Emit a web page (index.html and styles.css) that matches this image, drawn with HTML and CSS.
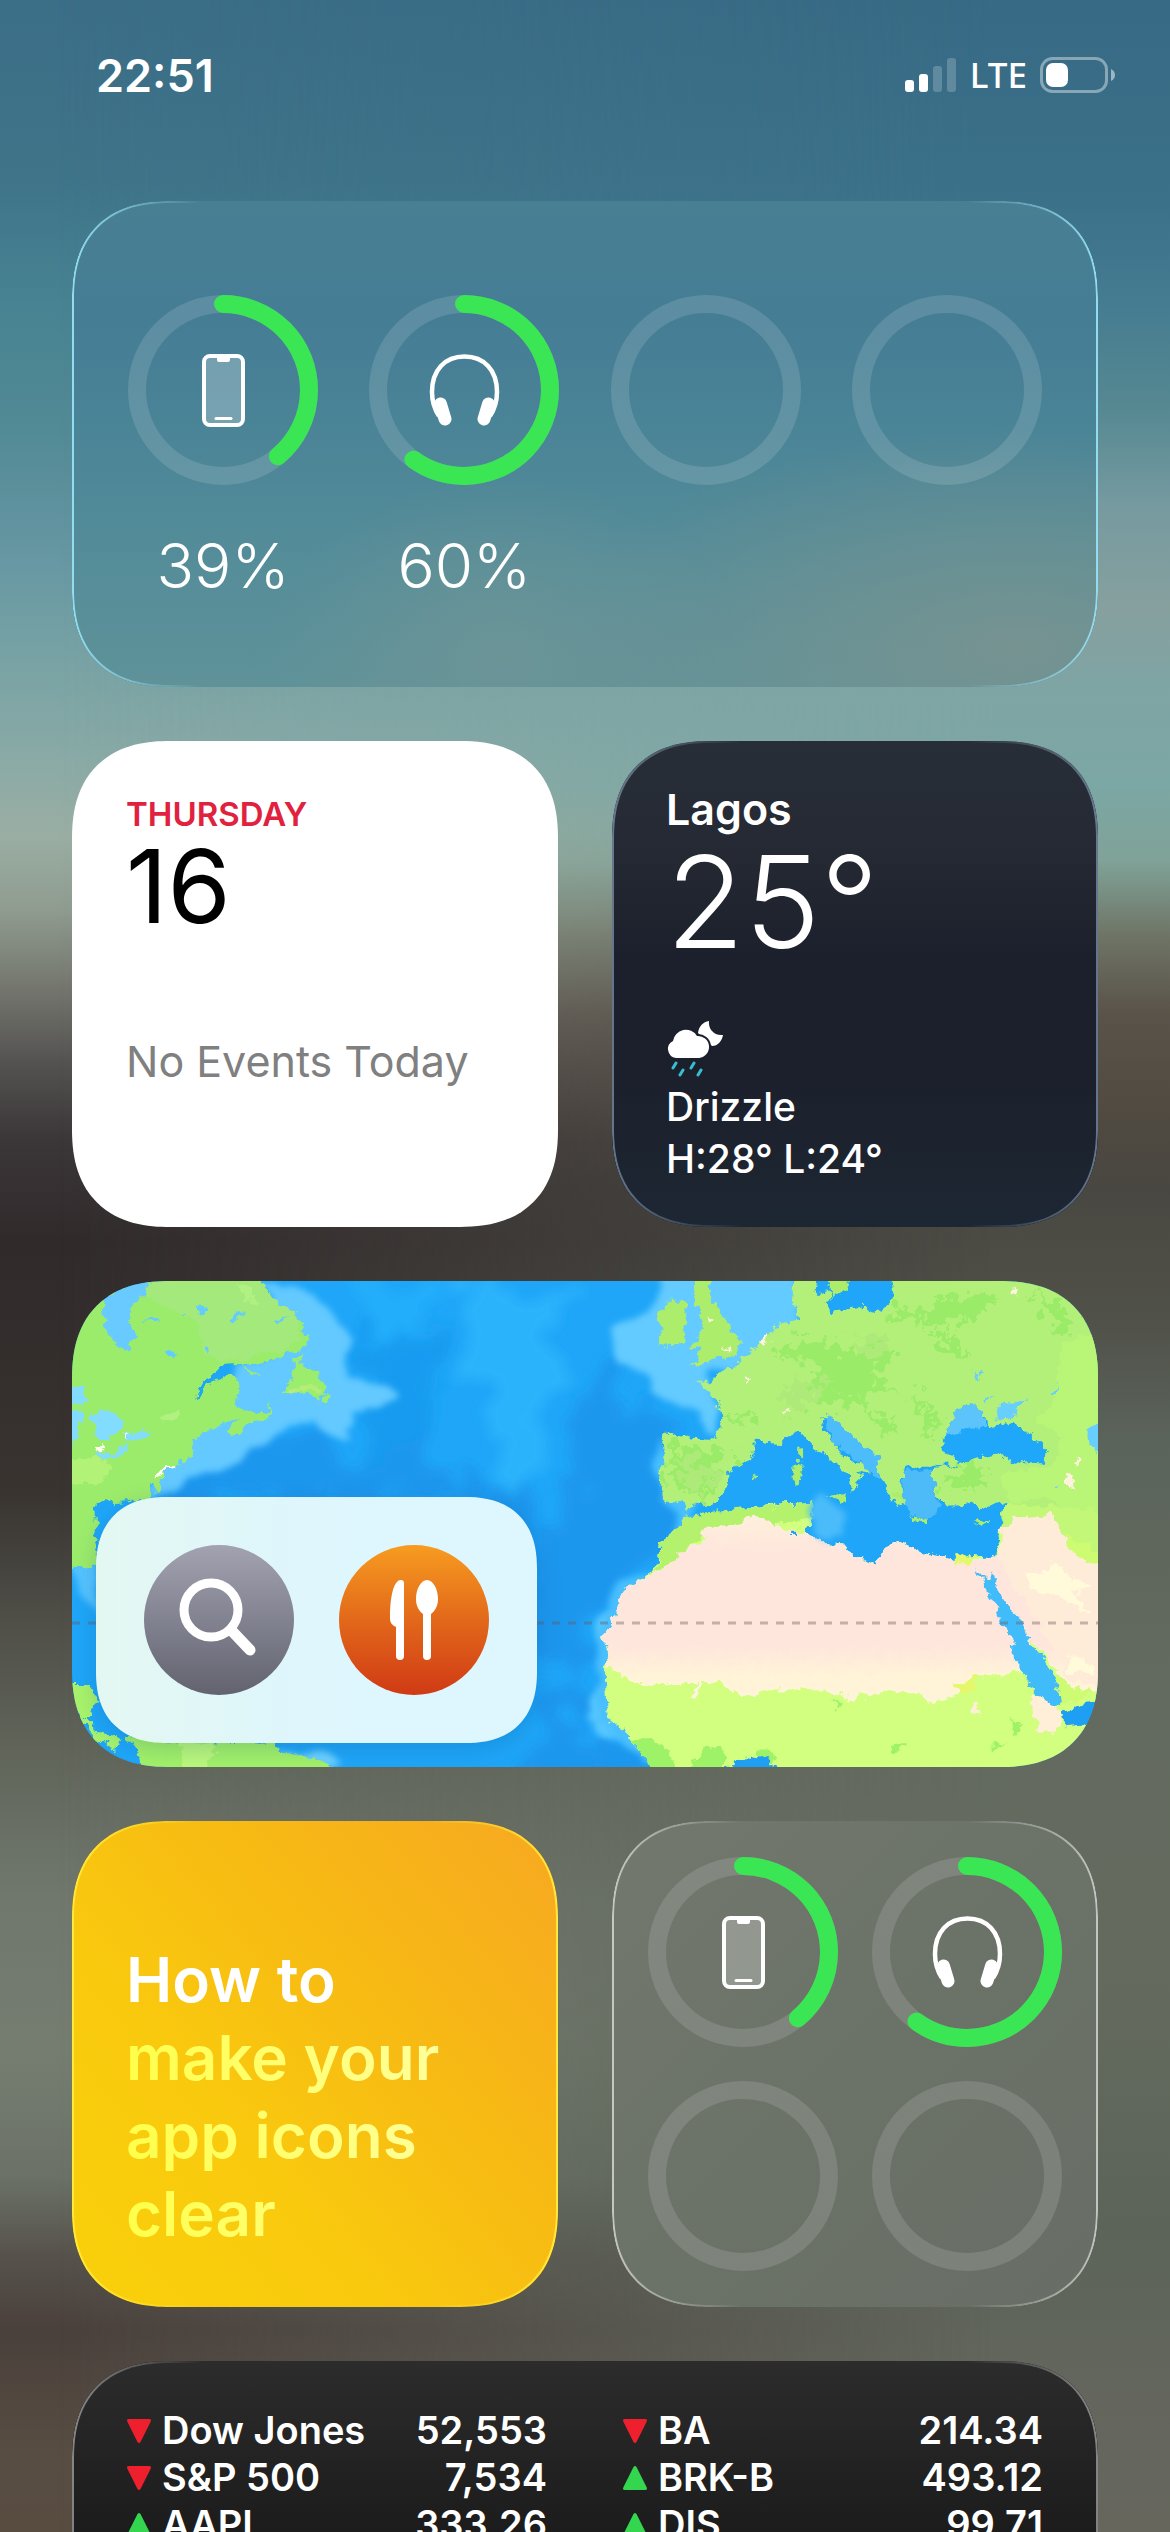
FILE: index.html
```html
<!DOCTYPE html>
<html lang="en">
<head>
    <meta charset="UTF-8">
    <meta name="viewport" content="width=device-width, initial-scale=1.0">
    <title>Today View</title>
    <link rel="stylesheet" href="styles.css">
</head>
<body>
    <!-- Shared icons -->
    <svg class="sprite" aria-hidden="true">
        <symbol id="icon-phone" viewBox="0 0 73 73">
            <rect x="17" y="2" width="39" height="69" rx="6" fill="#fff" fill-opacity=".25" stroke="#fff" stroke-width="4"/>
            <path d="M30 3h13v3q0 2-2 2h-9q-2 0-2-2z" fill="#fff"/>
            <path d="M29 64.500h15" stroke="#fff" stroke-width="3" stroke-linecap="round"/>
        </symbol>
        <symbol id="icon-headphones" viewBox="0 0 73 73">
            <path d="M11 62C5 53 4 46 4 38 4 16 17 2.500 36.500 2.500S69 16 69 38c0 8-1 15-7 24" fill="none" stroke="#fff" stroke-width="4.500"/>
            <path d="M12.500 50l4.500 15M60.500 50l-4.500 15" stroke="#fff" stroke-width="13" stroke-linecap="round"/>
        </symbol>
    </svg>

    <div class="screen">
        <header class="status-bar">
            <time class="clock">22:51</time>
            <div class="status-icons">
                <svg class="signal" viewBox="0 0 52 36" aria-label="Signal">
                    <rect x="0" y="23" width="9" height="12" rx="3" fill="#fff"/>
                    <rect x="14" y="17" width="9" height="18" rx="3" fill="#fff"/>
                    <rect x="28" y="9" width="9" height="26" rx="3" fill="#fff" fill-opacity=".2"/>
                    <rect x="42" y="1" width="9" height="34" rx="3" fill="#fff" fill-opacity=".2"/>
                </svg>
                <span class="network">LTE</span>
                <svg class="battery" viewBox="0 0 76 36" aria-label="Battery 39%">
                    <rect x="1.500" y="1.500" width="65" height="33" rx="11" fill="none" stroke="#fff" stroke-opacity=".4" stroke-width="3"/>
                    <path d="M71 12q4 2 4 6t-4 6z" fill="#fff" fill-opacity=".5"/>
                    <rect x="6" y="6" width="22" height="24" rx="7" fill="#fff"/>
                </svg>
            </div>
        </header>

        <main class="widgets">
            <section class="widget wide glass glass-blue batteries-wide">
                <div class="device">
                    <div class="ring">
                        <svg class="ring-track" viewBox="0 0 190 190">
                            <circle cx="95" cy="95" r="86"/>
                            <circle class="level" cx="95" cy="95" r="86" pathLength="100" stroke-dasharray="39 100"/>
                        </svg>
                        <svg class="device-icon"><use href="#icon-phone"/></svg>
                    </div>
                    <span class="percent">39%</span>
                </div>
                <div class="device">
                    <div class="ring">
                        <svg class="ring-track" viewBox="0 0 190 190">
                            <circle cx="95" cy="95" r="86"/>
                            <circle class="level" cx="95" cy="95" r="86" pathLength="100" stroke-dasharray="60 100"/>
                        </svg>
                        <svg class="device-icon"><use href="#icon-headphones"/></svg>
                    </div>
                    <span class="percent">60%</span>
                </div>
                <div class="device">
                    <div class="ring">
                        <svg class="ring-track" viewBox="0 0 190 190"><circle cx="95" cy="95" r="86"/></svg>
                    </div>
                </div>
                <div class="device">
                    <div class="ring">
                        <svg class="ring-track" viewBox="0 0 190 190"><circle cx="95" cy="95" r="86"/></svg>
                    </div>
                </div>
            </section>

            <section class="widget calendar">
                <h2 class="weekday">THURSDAY</h2>
                <p class="day">16</p>
                <p class="events">No Events Today</p>
            </section>

            <section class="widget glass weather">
                <h2 class="city">Lagos</h2>
                <p class="temp">25°</p>
                <svg class="weather-icon" viewBox="0 0 58 56" aria-hidden="true">
                    <path d="M43 0c-1 8 5 15 14 14-1 6-5 11-11 11L32 12C33 5 37 1 43 0z" fill="#fff"/>
                    <path d="M10 37A9 9 0 0 1 7 20 13 13 0 0 1 31 15 11 11 0 1 1 33 37z" fill="#fff" stroke="#1b202c" stroke-width="4" paint-order="stroke"/>
                    <path d="M10 42l-3 5M17 49l-3 5M28 42l-3 5M35 49l-3 5" stroke="#35bfd1" stroke-width="3" stroke-linecap="round"/>
                </svg>
                <p class="forecast">Drizzle</p>
                <p class="forecast">H:28° L:24°</p>
            </section>

            <section class="widget wide map">
                <svg class="map-canvas" viewBox="0 0 1026 486" preserveAspectRatio="xMidYMid slice" aria-hidden="true">
                    <defs>
                        <filter id="soft" x="-20%" y="-20%" width="140%" height="140%">
                            <feTurbulence type="fractalNoise" baseFrequency=".008" numOctaves="4" seed="3" result="noise"/>
                            <feDisplacementMap in="SourceGraphic" in2="noise" scale="90" xChannelSelector="R" yChannelSelector="G"/>
                            <feGaussianBlur stdDeviation="9"/>
                        </filter>
                        <filter id="softer" x="-20%" y="-20%" width="140%" height="140%">
                            <feTurbulence type="fractalNoise" baseFrequency=".008" numOctaves="4" seed="8" result="noise"/>
                            <feDisplacementMap in="SourceGraphic" in2="noise" scale="260" xChannelSelector="R" yChannelSelector="G"/>
                            <feGaussianBlur stdDeviation="16"/>
                        </filter>
                        <!-- roughens the coastlines -->
                        <filter id="coast" x="-5%" y="-5%" width="110%" height="110%" color-interpolation-filters="sRGB">
                            <feTurbulence type="fractalNoise" baseFrequency=".035" numOctaves="4" seed="5" result="noise"/>
                            <feDisplacementMap in="SourceGraphic" in2="noise" scale="38" xChannelSelector="R" yChannelSelector="G"/>
                        </filter>
                        <filter id="terrain" x="-5%" y="-5%" width="110%" height="110%" color-interpolation-filters="sRGB">
                            <feTurbulence type="fractalNoise" baseFrequency=".03" numOctaves="4" seed="11" result="noise"/>
                            <feDisplacementMap in="SourceGraphic" in2="noise" scale="130" xChannelSelector="R" yChannelSelector="G"/>
                        </filter>
                        <linearGradient id="sahara" x1="0" y1="0" x2="0" y2="1">
                            <stop offset="0" stop-color="#fff0dc"/>
                            <stop offset=".2" stop-color="#fee6dc"/>
                            <stop offset=".7" stop-color="#fee6dc"/>
                            <stop offset=".85" stop-color="#fff3d8"/>
                            <stop offset="1" stop-color="#fff4d8"/>
                        </linearGradient>
                    </defs>
                    <rect width="1026" height="486" fill="#1fa6f8"/>

                    <!-- Atlantic and the Americas -->
                    <g transform="translate(-12 -11) scale(.357 .333)">
                        <g filter="url(#softer)">
                            <path d="M240 700L480 550 700 470 840 540 900 420 1000 380 1100 600 1180 700 1250 900 1420 760 1450 560 1500 300 1700 450 1750 800 1600 950 1450 1150 1300 1500 1500 1560 1750 1560 1650 1420 1480 1420 1450 1300 1330 1200 1300 680z" fill="#1b97ee"/>
                            <path d="M860 200L1030 160 1090 330 1030 460 880 600z" fill="#199bf0"/>
                            <path d="M1130 20h330l-60 180-40 300-100 240-60-100 20-200-90-200z" fill="#2cb3fb"/>
                            <path d="M760 20h320l-20 100-180 60z" fill="#24aefb"/>
                        </g>
                        <g filter="url(#soft)">
                            <path d="M560 30L680 60 760 110 810 220 820 330 900 330 945 390 840 440 820 520 760 490 700 460 560 520 450 590 360 620 280 690 230 690 300 560 380 480 480 300 640 220z" fill="#63c9ff"/>
                            <path d="M30 880L110 880 110 1050 60 1000z" fill="#55c4ff"/>
                            <path d="M600 1420L800 1490 700 1500z" fill="#6dd2ff"/>
                            <path d="M1570 1000L1500 1080 1540 1180 1510 1300 1490 1400 1580 1400z" fill="#56c6ff"/>
                        </g>
                        <g filter="url(#coast)">
                            <path d="M0 0H555L600 90 655 125 690 190 685 230 640 245 600 275 455 285 405 330 375 390 390 380 430 335 480 315 505 325 505 350 490 375 500 410 520 425 575 430 590 395 590 420 580 445 540 455 500 490 480 505 468 480 480 460 510 440 460 455 400 490 372 510 372 555 325 580 300 600 280 635 280 665 268 672 265 640 250 640 250 690 100 700 100 895 0 885z" fill="#9cec6c"/>
                            <path d="M150 0H550L600 90 655 125 680 190 640 235 455 275 400 250 380 150 260 90z" fill="#a3e97b"/>
                            <path d="M20 560L130 570 145 600 110 640 20 645z" fill="#b2f277"/>
                            <path d="M275 440l45-10 20-15-10 35-50 5zM490 50l40-5 25 55-30-10z" fill="#b0f182"/>
                            <path d="M120 90L150 70 190 40 250 38 245 65 215 95 190 120 210 205 180 245 150 215 130 180z" fill="#68caff"/>
                            <path d="M20 345l48 15 10 40-58 5zM85 430l40-10 50 20 5 30-25 15-15 30-25 0-20-50zM180 495l75-15-5 25-65 8zM105 555l40-10 50-20-10 20-50 20-30 0zM20 430l48-5-20 60-28 60z" fill="#82dcff"/>
                            <path d="M385 110l15 0 10 15-15 15zM482 140l25-15 15 10-25 12-5 15zM597 155l40-20-30 30zM228 150l30-10 25 10-20 10zM302 255l18-15 5 10-15 15zM410 235l15 5-5 10zM335 125l12 0-5 12z" fill="#62ccff"/>
                            <path d="M680 238L660 280 640 340 615 370 650 365 690 372 720 390 725 370 740 375 748 355 735 335 735 310 705 305 690 290 672 285zM728 380l22-5-5 25-15-5zM508 290l25 10 25 15-5 5-30-15z" fill="#9ded6d"/>
                            <path d="M640 350l80 0 10 12-92 0z" fill="#b6ed7a"/>
                            <path d="M180 485l5 12 15-4-12 6-5 8zM100 540l18-12 4 10-12 12zM265 605l20-5 15-15 25 2-20 10-20 18-10 5z" fill="#fffef0"/>
                            <path d="M20 1240l58 0 22 30-5 40-20 40 45 45 55 10-15 40-50-30-32-40-58-80z" fill="#a8f36b"/>
                            <path d="M178 1395l40 15 380 10 40 30 120 35 40 50H240l-25-90z" fill="#a2f169"/>
                            <path d="M340 1415l100 10-30 90-70 5z" fill="#baf87c"/>
                        </g>
                    </g>

                    <!-- Europe, Africa and the Middle East -->
                    <g transform="translate(528 -11) scale(.333)">
                        <g filter="url(#soft)">
                            <path d="M190 0L600 0 600 160 430 290 330 310 350 400 365 500 330 500 300 440 210 380 110 310 40 250 50 170 130 140z" fill="#63cbff"/>
                            <path d="M190 500L160 580 180 700 240 730 200 850 150 920 60 960 0 1050 -10 1200 0 1350 60 1430 150 1490 220 1490 200 900 300 700z" fill="#4abfff"/>
                        </g>
                        <path d="M-20 1400l80 50 130 80H-20z" fill="#1b97ee" filter="url(#soft)"/>
                        <g filter="url(#coast)">
                            <path d="M870 0H1560V1320L1480 1290 1420 1310 1380 1315 1340 1290 1300 1240 1230 1180 1200 1060 1190 890 1180 860 1200 790 1215 700 1180 705 1140 725 1115 695 1080 710 1045 710 1015 690 1000 650 1000 590 1060 590 1120 565 1030 545 1025 520 1050 470 1080 410 1130 400 1160 470 1170 480 1230 460 1290 490 1340 540 1345 570 1310 585 1240 575 1200 555 1130 560 1060 585 960 585 915 595 905 640 910 700 895 710 870 670 835 610 830 560 780 520 735 485 700 435 665 440 670 475 730 560 800 595 810 615 775 605 780 640 755 670 755 625 690 570 640 530 605 485 575 490 545 520 465 512 460 560 385 605 385 660 350 690 290 705 265 720 245 698 190 695 180 620 195 570 185 505 200 488 250 500 350 510 370 440 350 390 320 360 290 340 350 330 355 300 400 305 430 260 510 195 520 170 600 150 595 110 580 90 585 0 650 0 640 70 690 110 690 130 800 110 840 125 880 90z" fill="#b3f07a"/>
                        </g>
                        <g filter="url(#terrain)">
                            <path d="M220 525l60 5 130 10-50 40-15 90-40 15-60-20-40-10 10-70zM530 270l50-60 90-5 60 40 90-20 70 30-60 60 80 60 50 10 50 50 10 60-30 10-40-10 40-30-40-70-80-40-60 10-10 60 60 20 30 40-40-10-50-40-30-50-40 20-80 0-20-60 30-50-50-40zM860 130l60-20 40 20 100-60 110 10-20 60-120 20-100 0zM400 430l60-10 30 30-70 20zM1290 70l90 20 50 90-40 10-60-60zM990 180l60 0 50 80-60-20zM1040 610l60-20 80 15-50 50-100 0z" fill="#9aec68"/>
                            <path d="M240 560l50-10 20 40 50 20-40 50-40 10-30-40zM580 340l80-10 60 20-60 20-80 50-40-20zM760 200l90-10 20 50-80 20z" fill="#aeea7a"/>
                        </g>
                        <g filter="url(#coast)">
                            <path d="M1400 210l130-30v560l-130 0-60-60-110 20-30-90 160-20 30-90-90-50 60-60z" fill="#b9f576"/>
                            <path d="M200 95l55 0 5 30-10 90-75 15 15-55-20-40zM270 20l60 0 0 60 30 50 25 30 5 35 35 0-5 50-30 20-60 5-60 20 40-45-30-10 0-20 20-20 10-30-20-60zM685 20h70l-10 40-50 30zM595 530l12 10 0 30-12 0zM583 575l22 5 0 50-15 10-12-20zM680 675l55-5-2 30zM880 670l30 0 5 35-20-15zM930 740l60 12-15 8-40-8zM1125 755l38-10-20 24zM453 618l18 5-12 10z" fill="#aced6c"/>
                            <path d="M635 50l35 30-35 15-20-20zM650 80l35-20 5 30-20 25z" fill="#b3f07a"/>
                            <path d="M250 742L300 750 370 745 430 715 520 705 640 700 640 740 620 790 680 820 735 825 760 860 830 885 850 850 870 815 905 820 960 850 1065 865 1180 860 1205 780 1230 710 1540 730V1530H220L150 1480 90 1400 20 1340 15 1230 25 1170 10 1100 50 1030 60 980 100 940 170 900 180 820 235 780z" fill="#d2ff80"/>
                            <path d="M250 742L430 715 640 700 640 745 500 770 300 800 175 910 180 820 235 780z" fill="#b4f26d"/>
                            <path d="M310 780L430 755 460 735 530 770 620 790 680 820 735 825 760 860 830 885 850 850 870 815 905 820 960 850 1065 865 1120 880 1185 855 1220 820 1200 780 1240 745 1350 735 1390 780 1400 830 1530 880V1270L1400 1260 1360 1180 1290 1110 1280 1200 1210 1220 1120 1220 1050 1290 1000 1300 950 1270 870 1270 750 1290 680 1260 530 1260 430 1280 360 1240 100 1240 30 1200 25 1160 10 1100 50 1030 60 980 100 940 190 900 240 850 310 810z" fill="url(#sahara)"/>
                            <path d="M1215 700l315 20v140l-130-20-20-60-100-30-70 30z" fill="#c3f777"/>
                            <path d="M1240 745l120-10 30 60 140 90v380l-130-40-40-100-120-180-50-100z" fill="#ffecd8"/>
                            <path d="M1280 910l60 0 20-40 60 60 60 20-60 20 60 70-100-60-80-20zM1410 1150l75 40v20l-80 0z" fill="#fffbda"/>
                            <path d="M1400 790l130 75v30l-100-40-30-30zM1360 1200l50 50 70 20-100 45z" fill="#cdfb72"/>
                            <path d="M1300 1270l70 40 15 50-20 30-40 0-25-70zM1115 1295l20 10 5 35-15-15z" fill="#ffeed8"/>
                            <path d="M1065 858l40-8 20 18-20 18-40-8zM1060 1250l70-35 0 40-40 20z" fill="#e5f86c"/>
                            <path d="M100 1410l90 10 45 90-60 20zM270 1500l50-70 60 20-20 70zM470 1440l50 0 10 30-30 20-20-30zM880 1420l35 0-10 30-30 0zM690 1285l30 20-5 10-20-15zM1170 1420l50 5-40 20zM1230 1340l40 30-20 30z" fill="#9df268"/>
                            <path d="M1128 897L1165 935 1182 905 1188 945 1230 1020 1275 1060 1285 1120 1330 1160 1365 1220 1380 1310 1340 1300 1290 1250 1270 1200 1240 1165 1235 1100 1200 1060 1190 1010 1155 945z" fill="#41bcfb"/>
                            <path d="M1375 1335l60-30 90-20-25 75-100 10zM375 1500l70-40 60 10 20 40zM568 786h24v10h-24z" fill="#1f9ff3"/>
                            <path d="M1025 545L1030 510 1070 420 1115 402 1155 430 1160 475 1235 460 1290 490 1345 545 1330 580 1260 580 1190 555 1120 565 1090 580z" fill="#1fa8f9"/>
                            <path d="M1035 500L1070 420 1115 402 1155 430 1150 470 1090 480z" fill="#5cc3fb"/>
                            <path d="M1190 410l90-25-15 25-25 35-45 0zM1120 305l20 5 5 12-20-5zM1350 370l28-30-8 25-18 10zM1460 480l60-40v140l-42-50zM1155 380l40-5-35 15zM1360 650l20-5-5 10z" fill="#68ceff"/>
                            <path d="M670 440l25-10 40 50 100 75 0 70-40-30-90-70z" fill="#4dbcfa"/>
                            <path d="M910 605l88-5 5 70 15 30-30 55-55-20-25-50z" fill="#4dbbf7"/>
                            <path d="M1238 60l17-5 5 24-18 0zM322 145l8 8 12 2-15 12zM365 233l22-8 0 14zM488 215l16-20 2 20-15 12zM436 320l14 6-6 12zM553 420l16-2-4 14zM1390 615l45 20-10 25-30-30zM1430 565l20 10-10 10zM270 1295l20-45 20-15-25 55z" fill="#fff3e0"/>
                        </g>
                        <path d="M650 660l80 50 5 90-60 5-40-30 10-60z" fill="#4bbcfa" filter="url(#soft)"/>
                    </g>
                    <path class="tropic" d="M0 342H1026"/>
                </svg>
                <div class="map-actions">
                    <button type="button" class="map-btn map-search" aria-label="Search">
                        <svg viewBox="0 0 150 150">
                            <circle cx="67" cy="65" r="27" fill="none" stroke="#fff" stroke-width="9"/>
                            <path d="M88 86l18 19" stroke="#fff" stroke-width="11" stroke-linecap="round"/>
                        </svg>
                    </button>
                    <button type="button" class="map-btn map-food" aria-label="Restaurants">
                        <svg viewBox="0 0 150 150" fill="#fff">
                            <path d="M65 38v73a4 4 0 0 1-8 0V82c-4-2-6-4-6-9 0-19 3-38 11-38q3 0 3 3z"/>
                            <path d="M88 35c6 0 11 9 11 19 0 7-3 12-7 15v42a4 4 0 0 1-8 0V69c-4-3-7-8-7-15 0-10 5-19 11-19z"/>
                        </svg>
                    </button>
                </div>
            </section>

            <section class="widget glass tips">
                <p class="tip">How to <span class="tip-accent">make your app icons clear</span></p>
            </section>

            <section class="widget glass glass-grey batteries-small">
                <div class="ring">
                    <svg class="ring-track" viewBox="0 0 190 190">
                        <circle cx="95" cy="95" r="86"/>
                        <circle class="level" cx="95" cy="95" r="86" pathLength="100" stroke-dasharray="39 100"/>
                    </svg>
                    <svg class="device-icon"><use href="#icon-phone"/></svg>
                </div>
                <div class="ring">
                    <svg class="ring-track" viewBox="0 0 190 190">
                        <circle cx="95" cy="95" r="86"/>
                        <circle class="level" cx="95" cy="95" r="86" pathLength="100" stroke-dasharray="60 100"/>
                    </svg>
                    <svg class="device-icon"><use href="#icon-headphones"/></svg>
                </div>
                <div class="ring">
                    <svg class="ring-track" viewBox="0 0 190 190"><circle cx="95" cy="95" r="86"/></svg>
                </div>
                <div class="ring">
                    <svg class="ring-track" viewBox="0 0 190 190"><circle cx="95" cy="95" r="86"/></svg>
                </div>
            </section>

            <section class="widget wide glass stocks">
                <table class="quotes">
                    <tr>
                        <td class="trend"><svg viewBox="0 0 24 24"><path class="down" d="M2 0h20q3 0 1.500 3l-10 20q-1.500 2-3 0L.5 3Q-1 0 2 0z"/></svg></td>
                        <td>Dow Jones</td>
                        <td class="price">52,553</td>
                    </tr>
                    <tr>
                        <td class="trend"><svg viewBox="0 0 24 24"><path class="down" d="M2 0h20q3 0 1.500 3l-10 20q-1.500 2-3 0L.5 3Q-1 0 2 0z"/></svg></td>
                        <td>S&amp;P 500</td>
                        <td class="price">7,534</td>
                    </tr>
                    <tr>
                        <td class="trend"><svg viewBox="0 0 24 24"><path class="up" d="M2 24h20q3 0 1.500-3l-10-20q-1.500-2-3 0L.5 21Q-1 24 2 24z"/></svg></td>
                        <td>AAPL</td>
                        <td class="price">333.26</td>
                    </tr>
                </table>
                <table class="quotes">
                    <tr>
                        <td class="trend"><svg viewBox="0 0 24 24"><path class="down" d="M2 0h20q3 0 1.500 3l-10 20q-1.500 2-3 0L.5 3Q-1 0 2 0z"/></svg></td>
                        <td>BA</td>
                        <td class="price">214.34</td>
                    </tr>
                    <tr>
                        <td class="trend"><svg viewBox="0 0 24 24"><path class="up" d="M2 24h20q3 0 1.500-3l-10-20q-1.500-2-3 0L.5 21Q-1 24 2 24z"/></svg></td>
                        <td>BRK-B</td>
                        <td class="price">493.12</td>
                    </tr>
                    <tr>
                        <td class="trend"><svg viewBox="0 0 24 24"><path class="up" d="M2 24h20q3 0 1.500-3l-10-20q-1.500-2-3 0L.5 21Q-1 24 2 24z"/></svg></td>
                        <td>DIS</td>
                        <td class="price">99.71</td>
                    </tr>
                </table>
            </section>
        </main>
    </div>
</body>
</html>
```
FILE: styles.css
```css
* {
    box-sizing: border-box;
}

body {
    margin: 0;
    font-family: Inter, 'Liberation Sans', sans-serif;
    color: #fff;
}

h2, p {
    margin: 0;
    font-weight: inherit;
}

.sprite {
    position: absolute;
    width: 0;
    height: 0;
}

/* Wallpaper: one vertical gradient for the left edge, a second one faded in to the right */
.screen {
    position: relative;
    height: 100vh;
    overflow: hidden;
    background: linear-gradient(#3b6e87, #3f7489 7%, #478392 12%, #528a95 17%, #6697a3 22%, #73a0a4 25%, #8aaaa6 30%, #9aaea3 33%, #8f9b8f 36%, #74766e 39%, #545251 42%, #3b3638 45%, #302a2b 49%, #342e2d 54%, #393430 59%, #4f4f48 64%, #606459 69%, #70786e 75%, #757d71 81%, #6b7166 86%, #57534c 89%, #4a403c 92%, #584d42 97%, #584c41);
}

.screen::before {
    content: '';
    position: absolute;
    inset: 0;
    background: linear-gradient(#376a84, #3c718a 8%, #457c91 12%, #558891 16%, #769aa0 20%, #86a09e 24%, #7fa4a4 27%, #7ba7a4 31%, #80a298 34%, #6e7465 37%, #5a5349 40%, #504a41 44%, #494741 47%, #505149 52%, #5b645b 57%, #636a5f 66%, #646a5e 78%, #5c6459 88%, #64665d 95%, #66665d);
    -webkit-mask-image: linear-gradient(to right, transparent 5%, #000 85%);
    mask-image: linear-gradient(to right, transparent 5%, #000 85%);
}

.status-bar {
    position: relative;
    display: flex;
    justify-content: space-between;
    align-items: center;
    height: 150px;
    padding: 0 54px 0 96px;
}

.clock {
    font-size: 45px;
    font-weight: 600;
}

.status-icons {
    display: flex;
    align-items: center;
    gap: 13px;
}

.signal {
    width: 52px;
    height: 36px;
}

.network {
    font-family: 'Noto Sans', sans-serif;
    font-size: 35px;
    font-weight: 500;
    line-height: 36px;
}

.battery {
    width: 76px;
    height: 36px;
}

.widgets {
    position: relative;
    display: grid;
    grid-template-columns: 1fr 1fr;
    grid-auto-rows: 486px;
    gap: 54px;
    padding: 51px 72px 0;
}

.widget {
    position: relative;
    border-radius: 84px;
    overflow: hidden;
}

.wide {
    grid-column: 1 / -1;
}

/* Light rim along the sides of the glass */
.glass {
    --rim: rgba(255, 255, 255, 0.5);
}

.glass::after {
    content: '';
    position: absolute;
    inset: 0;
    padding: 2px;
    border-radius: inherit;
    background: linear-gradient(to right, var(--rim), transparent 130px, transparent calc(100% - 130px), var(--rim));
    -webkit-mask: linear-gradient(#000 0 0) content-box exclude, linear-gradient(#000 0 0);
    mask: linear-gradient(#000 0 0) content-box exclude, linear-gradient(#000 0 0);
    pointer-events: none;
}

.glass-blue {
    --rim: #94dcef;
    background:
        radial-gradient(ellipse at 92% 92%, #769391 0, transparent 35%),
        radial-gradient(ellipse at 42% 94%, #6b9497 0, transparent 28%),
        linear-gradient(#487f93, #457d95 25%, #4b8597 50%, #558d99 75%, #5f9299);
}

.glass-grey {
    --rim: rgba(255, 255, 255, 0.6);
    background: linear-gradient(135deg, #72786e, #6b7268 50%, #686e65);
}

/* Batteries */
.batteries-wide {
    display: flex;
    justify-content: space-between;
    align-items: flex-start;
    padding: 94px 56px 0;
}

.device {
    display: flex;
    flex-direction: column;
    align-items: center;
    gap: 43px;
}

.ring {
    display: grid;
    place-items: center;
    width: 190px;
    height: 190px;
}

.ring > svg {
    grid-area: 1 / 1;
}

.ring-track {
    width: 190px;
    height: 190px;
    fill: none;
    stroke: rgba(255, 255, 255, 0.13);
    stroke-width: 18;
    transform: rotate(-90deg);
}

.level {
    stroke: #3ae653;
    stroke-linecap: round;
}

.device-icon {
    width: 73px;
    height: 73px;
}

.percent {
    font-size: 62px;
    font-weight: 350;
    line-height: 76px;
}

.batteries-small {
    display: grid;
    grid-template-columns: auto auto;
    gap: 34px;
    place-content: center;
}

/* Calendar */
.calendar {
    padding: 53px 54px;
    background: #fff;
}

.weekday {
    color: #e0223f;
    font-size: 33px;
    font-weight: 600;
    line-height: 40px;
}

.day {
    color: #000;
    font-size: 102px;
    line-height: 104px;
}

.events {
    margin-top: 97px;
    color: #808080;
    font-size: 43px;
    line-height: 52px;
}

/* Weather */
.weather {
    --rim: rgba(150, 175, 205, 0.6);
    padding: 42px 54px;
    background: linear-gradient(#282e37, #252a34 20%, #1c202c 45%, #1b202c 70%, #1d2733);
}

.city {
    font-size: 43px;
    font-weight: 600;
    line-height: 52px;
}

.temp {
    font-size: 128px;
    font-weight: 300;
    line-height: 134px;
}

.weather-icon {
    display: block;
    width: 58px;
    height: 56px;
    margin: 52px 0 4px;
}

.forecast {
    font-size: 39px;
    font-weight: 500;
    line-height: 52px;
}

/* Map */
.map {
    display: flex;
    align-items: flex-end;
    padding: 24px;
}

.map-canvas {
    position: absolute;
    inset: 0;
    width: 100%;
    height: 100%;
}

.tropic {
    fill: none;
    stroke: rgba(110, 90, 90, 0.4);
    stroke-width: 3;
    stroke-dasharray: 8 8;
}

.map-actions {
    position: relative;
    display: flex;
    gap: 45px;
    padding: 48px;
    border-radius: 64px;
    background: linear-gradient(to right, #e4f8f2, #def6fc 45%, #def7ff);
    box-shadow: 0 6px 24px rgba(0, 60, 120, 0.2);
}

.map-btn {
    width: 150px;
    height: 150px;
    padding: 0;
    border: none;
    border-radius: 50%;
    cursor: pointer;
}

.map-search {
    background: linear-gradient(#a2a2b1, #62636f);
}

.map-food {
    background: linear-gradient(#f79c20, #e2681a 50%, #d03a15);
}

/* Tips */
.tips {
    --rim: #ffe93a;
    display: flex;
    align-items: flex-end;
    padding: 54px;
    background: linear-gradient(50deg, #f9d00a, #f9c90e 35%, #f7b914 65%, #f7a922);
}

.tip {
    font-size: 62px;
    font-weight: 600;
    line-height: 78px;
}

.tip-accent {
    display: block;
    color: transparent;
    background: linear-gradient(to right, #ffff4a, #ffff9c 320px);
    -webkit-background-clip: text;
    background-clip: text;
}

/* Stocks */
.stocks {
    --rim: rgba(255, 255, 255, 0.45);
    display: grid;
    grid-template-columns: 1fr 1fr;
    align-items: start;
    gap: 76px;
    padding: 46px 55px;
    background: linear-gradient(#2c2c2c, #1c1c1c 35%, #141414);
}

.quotes {
    width: 100%;
    border-collapse: collapse;
    font-size: 38px;
    font-weight: 600;
    line-height: 47px;
}

.quotes td {
    padding: 0;
    white-space: nowrap;
}

.quotes .trend {
    width: 35px;
}

.trend svg {
    display: block;
    width: 24px;
    height: 24px;
}

.quotes .price {
    text-align: right;
}

.up {
    fill: #34d64f;
}

.down {
    fill: #ef202d;
}

/* Smoother corners where the browser has them */
@supports (corner-shape: squircle) {
    .widget {
        border-radius: 98px;
        corner-shape: superellipse(1.25);
    }

    .glass::after {
        corner-shape: superellipse(1.25);
    }

    .map-actions {
        border-radius: 72px;
        corner-shape: superellipse(1.25);
    }
}
```
